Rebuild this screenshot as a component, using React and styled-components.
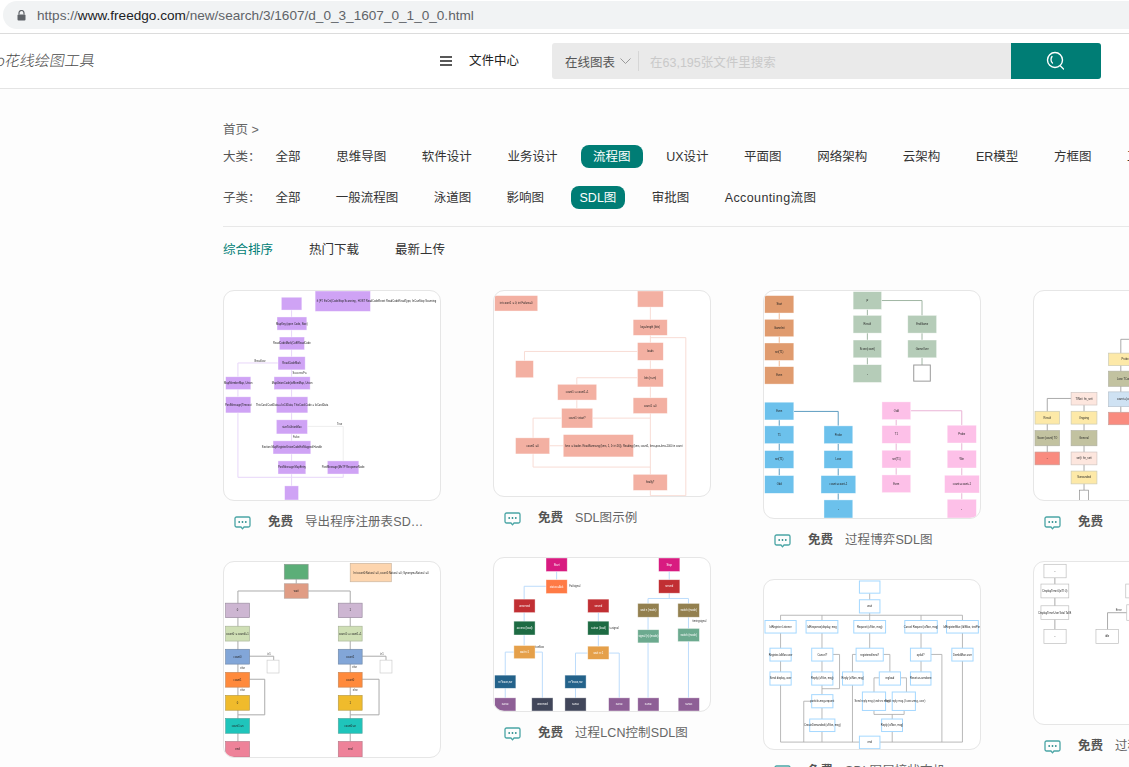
import React from 'react';
import styled, { createGlobalStyle } from 'styled-components';

const FONT = '"Liberation Sans", "Noto Sans CJK SC", sans-serif';
const TEAL = '#007d75';

const Global = createGlobalStyle`
  html, body { margin: 0; padding: 0; background: #fdfdfd; }
  body { font-family: ${FONT}; }
  * { box-sizing: border-box; }
`;

const Page = styled.div`
  width: 1129px; height: 767px; overflow: hidden; background: #fdfdfd;
  display: flex; flex-direction: column;
`;

/* browser chrome */
const Chrome = styled.div`
  height: 34px; flex: none; padding: 1px 0 4px 3px; background: #fff; border-bottom: 1px solid #dcdcdc;
`;
const UrlPill = styled.div`
  height: 28px; width: 1200px; border-radius: 14px; background: #f1f3f4;
  display: flex; align-items: center; gap: 11px; padding-left: 14px;
  font-size: 13.6px; color: #5f6368; white-space: nowrap;
`;
const Host = styled.span` color: #202124; `;

/* header */
const Header = styled.header`
  height: 55px; flex: none; background: #fff; border-bottom: 1px solid #e4e4e4;
  display: flex; align-items: center; position: relative;
`;
const LogoBox = styled.div`
  width: 440px; flex: none; overflow: hidden;
`;
const LogoText = styled.div`
  margin-left: -12px; font-family: "Noto Sans CJK SC", sans-serif; font-weight: 300; font-size: 15px;
  color: #4a4a4a; transform: skewX(-10deg) translateY(-2px); white-space: nowrap; width: 120px;
`;
const Menu = styled.div`
  display: flex; align-items: center; gap: 17px; width: 112px; flex: none;
  font-size: 12.5px; color: #222;
`;
const MenuText = styled.span` padding-bottom: 3px; `;
const Search = styled.div`
  width: 549px; height: 36px; flex: none; display: flex; border-radius: 3px; overflow: hidden;
  background: #eaeaea;
`;
const Scope = styled.div`
  display: flex; align-items: center; gap: 5px; padding-left: 13px; font-size: 12.5px; color: #555;
  &::after { content: ''; width: 1px; height: 20px; background: #d6d6d6; margin-left: 2px; }
`;
const Placeholder = styled.div`
  flex: 1; display: flex; align-items: center; padding-left: 11px; font-size: 12.5px; color: #c9c9c9;
`;
const SearchBtn = styled.div`
  width: 90px; background: ${TEAL}; display: flex; align-items: center; justify-content: center;
`;

/* filters */
const Main = styled.main`
  padding: 31px 0 0 223px; flex: 1; min-height: 0;
`;
const Crumb = styled.div`
  height: 18px; line-height: 20px; font-size: 12.5px; color: #666; margin-bottom: 7px;
`;
const FilterRow = styled.div`
  height: 23px; display: flex; align-items: center; gap: ${p => p.$gap}px; margin-bottom: 18px; white-space: nowrap;
  font-size: 12.5px; color: #333;
`;
const FilterLabel = styled.span`
  width: 17px; height: 23px; line-height: 25px; color: #555; flex: none;
`;
const Tag = styled.span`
  height: 23px; line-height: 25px; flex: none; border-radius: 8px;
  letter-spacing: ${p => p.$track || 0}px;
  ${p => p.$pad ? `padding: 0 ${p.$pad}px; margin: 0 -${p.$pad}px; background: ${TEAL}; color: #fff;` : ''}
`;
const Rule = styled.div`
  height: 1px; background: #e8e8e8; margin-top: -1px;
`;
const Sorts = styled.div`
  display: flex; gap: 36px; height: 20px; line-height: 20px; margin: 13px 0 30px; font-size: 12.5px; color: #333;
`;
const Sort = styled.span` color: ${p => p.$on ? TEAL : '#333'}; `;

/* cards */
const Grid = styled.div`
  display: grid; grid-template-columns: repeat(4, 218px); column-gap: 52px; width: 1100px;
`;
const Column = styled.div` display: flex; flex-direction: column; `;
const Thumb = styled.div`
  width: 218px; height: ${p => p.$h}px; background: #fff; border: 1px solid #e6e6e6; border-radius: 11px; overflow: hidden;
`;
const DiagramSvg = styled.svg`
  display: block; width: 100%; height: 100%; filter: blur(.6px);
  font-family: "Liberation Sans", sans-serif; font-size: 8px;
`;
const Caption = styled.div`
  height: 60px; padding: 11px 0 0 11px; display: flex; align-items: flex-start; white-space: nowrap;
  font-size: 12.5px; line-height: 20px; color: #666;
`;
const Bubble = styled.svg` flex: none; margin: 4px 17px 0 0; `;
const Free = styled.b` color: #555; font-weight: 700; width: 37px; flex: none; `;
const Title = styled.span`
  max-width: 120px; overflow: hidden; text-overflow: ellipsis; letter-spacing: .1px;
`;

function Diagram({ y0 = 13, h, groups }) {
  return (
    <DiagramSvg viewBox={`25 ${y0} 652 ${h}`} preserveAspectRatio="none">
      {groups.map((g, i) => (
        <g key={i}>
          {(g.lines || []).map((l, j) => (
            <polyline key={j} points={l} fill="none" stroke={g.line || '#aaa'} strokeWidth={g.lw || 3} />
          ))}
          {(g.nodes || []).map(([a, b, c, d, t, tx], j) => (
            <g key={j}>
              <rect x={a} y={b} width={c - a} height={d - b} fill={g.fill || '#fff'}
                stroke={g.edge || 'rgba(255,255,255,.6)'} strokeWidth={g.ew || 2} />
              {t ? (
                <text x={tx || (a + c) / 2} y={(b + d) / 2 + 3} textAnchor={tx ? 'start' : 'middle'} fill={g.ink || '#222'}>{t}</text>
              ) : null}
            </g>
          ))}
          {(g.labels || []).map(([x, y, t], j) => (
            <text key={j} x={x} y={y} fill="#333">{t}</text>
          ))}
        </g>
      ))}
    </DiagramSvg>
  );
}

const d1 = { h: 636, groups: [
  { line: '#e8d6f9', lines: ['229,71 229,606', '188,232 67,232 67,335', '67,384 67,580 385,580 385,570'], labels: [[117,228,'Breaklow'],[232,265,'Success/Fa'],[366,421,'True'],[233,460,'False']] },
  { line: '#eeeeee', lines: ['277,425 385,425 385,530'] },
  { fill: '#cfa3f5', nodes: [
    [198,32,260,71],[300,13,467,75,'if (FT. ExCnt(CodeStop Scanning , HOST ReadCodeReset ReadCodeReadType, InCanStop Scanning',305],
    [185,92,275,132,'MapKey (open Code, Size)'],[192,153,268,192,'ReadCodeMark(CoElReadCode'],[188,213,270,253,'ReadCodeMark'],
    [176,274,285,313,'MapUnionCode(ioMemMap, Union'],[30,274,106,313,'MapMemberMap, Union'],[30,335,106,384,'PostMessage(Timeout'],
    [183,335,278,384,'ThisCard.CardData = IoCtlData; ThisCard.Code = IoCardData'],[183,405,277,448,'sizeToUnionMax'],
    [173,469,287,509,'Section MapRegisterUnionCodeExtMapped Handle'],[188,530,272,570,'PostMessage MapEntry'],
    [337,530,432,570,'PostMessage(MsTP ResponseNode'],[208,606,250,649] ] },
] };

const d2 = { h: 624, groups: [
  { line: '#f8dcd5', lines: ['497,13 497,636','497,155 604,155 604,636 497,636','458,197 117,197 117,225','458,277 275,277 275,370','323,400 497,400','229,400 143,400 143,549 497,549','193,484 234,484'] },
  { fill: '#f3b0a2', nodes: [
    [27,27,157,74,'int count1 := 0; int Failure=0'],[458,13,536,62],[445,100,548,148,'key=length (bits)'],[458,170,536,224,'loads'],
    [90,225,144,277],[458,250,536,305,'bits (n+m)'],[445,338,548,386,'count1 :=0'],[217,297,335,345,'count1 := count1+1'],
    [229,370,323,430,'count1 <start?'],[90,460,193,509,'count1 :=0'],
    [234,450,446,518,'kms := loader. ReadSamsung (kms, 1, 1<<<16)), Reading (kms, count1, kms-pos-kms-1000 in count',240],[445,571,548,620,'finally?'] ] },
] };

const d3 = { h: 690, groups: [
  { line: '#f2b892', lines: ['71,80 71,99','71,152 71,171','71,224 71,243'] },
  { fill: '#e09b6e', nodes: [[27,27,115,80,'Start'],[27,99,115,152,'GameInit'],[27,171,115,224,'set(T1)'],[27,243,115,296,'Even']] },
  { line: '#9fb5a3', lines: ['337,69 337,237','380,42 502,42 502,162','502,216 502,238'] },
  { fill: '#b5ccb8', nodes: [[294,15,380,69,'P'],[294,87,380,141,'Result'],[294,162,380,216,'Score(count)'],[294,237,380,291,'-'],[459,87,546,141,'EndGame'],[459,162,546,216,'GameOver']] },
  { edge: '#999', ew: 3, nodes: [[477,238,527,287]] },
  { line: '#5a9bc0', lines: ['71,405 71,574','115,379 249,379 249,423','249,477 249,648'] },
  { fill: '#6cc1ec', nodes: [[27,351,115,405,'Even'],[27,423,115,477,'T1'],[27,498,115,552,'set(T1)'],[27,574,115,628,'Odd'],[206,423,293,477,'Probe'],[206,498,293,552,'Lose'],[197,574,302,628,'count:=count-1'],[206,648,293,703,'-']] },
  { line: '#eab2d6', lines: ['424,404 424,572','468,377 622,377 622,421','622,475 622,646'] },
  { fill: '#fdc0e8', nodes: [[381,350,468,404,'Odd'],[381,422,468,476,'T1'],[381,497,468,551,'set(T1)'],[381,572,468,626,'Even'],[578,421,666,475,'Probe'],[578,497,666,551,'Win'],[570,573,675,627,'count:=count+1'],[578,646,666,703,'-']] },
] };

const d4 = { h: 636, groups: [
  { line: '#999', lw: 2.5, lines: ['287,160 360,160','287,160 287,382','137,340 65,340 65,503','176,360 176,619'] },
  { fill: '#fde9a8', edge: '#c9c9b5', nodes: [[250,202,350,240,'Probe'],[28,379,102,418,'Result'],[137,379,215,418,'Ongoing'],[137,561,215,600,'Surrounded']] },
  { fill: '#c2c2a0', edge: '#b0b0a0', nodes: [[250,257,350,303,'Lose TCancel'],[28,438,102,484,'Score:(count) TO'],[137,438,215,484,'General']] },
  { fill: '#cfe2f3', edge: '#b5c0cc', nodes: [[250,320,350,365,'count:=(count']] },
  { fill: '#f98b7f', edge: '#c9a09a', nodes: [[250,382,350,420],[28,503,102,542,'-']] },
  { fill: '#fde6de', edge: '#cfc4c0', nodes: [[137,322,215,360,'TINsit_fin_sett'],[137,503,215,542,'set(t_fin_sett']] },
  { edge: '#888', nodes: [[162,619,190,652]] },
] };

const e1 = { y0: 18, h: 592, groups: [
  { line: '#aaa', lines: ['243,70 243,84','207,106 67,106 67,563','279,106 406,106 406,563','102,304 175,304 175,316','442,304 514,304 514,316','102,374 148,374 148,482 67,482','442,374 493,374 493,482 406,482'],
    labels: [[155,300,'i>1'],[496,300,'i>1'],[74,343,'else'],[412,339,'else'],[74,410,'else'],[414,409,'else']] },
  { fill: '#5cae78', edge: '#8a9c90', nodes: [[207,25,279,70]] },
  { fill: '#e09c84', edge: '#b8a49c', nodes: [[207,84,279,128,'wait']] },
  { fill: '#fdd5ae', edge: '#c8b49e', nodes: [[406,22,530,78,'Int count0:Natural :=0, count1:Natural :=0; Synonym=Natural :=0',416]] },
  { fill: '#cdb6d2', edge: '#9a8ca0', nodes: [[30,143,102,187,'0'],[370,143,442,187,'1']] },
  { fill: '#cfdfb5', edge: '#a8b498', nodes: [[30,213,102,258,'count0 := count0+1'],[370,213,442,258,'count1 := count1+1']] },
  { fill: '#82a6d8', edge: '#7088a8', nodes: [[30,283,102,328,'count0'],[370,283,442,328,'count1']] },
  { fill: '#ff8a3c', edge: '#c88858', nodes: [[30,353,102,398,'count1'],[370,353,442,398,'count0']] },
  { fill: '#f0bb2c', edge: '#b89c48', nodes: [[30,423,102,468,'0'],[370,423,442,468,'1']] },
  { fill: '#1fc5bb', edge: '#50a8a0', nodes: [[30,493,102,538,'count1:=n'],[370,493,442,538,'count0:=n']] },
  { fill: '#ee8299', edge: '#b87888', nodes: [[30,563,102,610,'end'],[370,563,442,610,'end']] },
  { edge: '#ccc', nodes: [[155,316,191,355],[496,316,532,355]] },
] };

const e2 = { y0: 22, h: 465, groups: [
  { line: '#bcdcfb', lines: ['214,63 214,88','182,108 116,108 116,288','85,308 59,308 59,447','149,308 171,308 171,447','340,188 340,290','308,311 271,311 271,447','372,311 403,311 403,447','554,63 554,145','490,145 612,145','490,145 490,447','612,145 612,447'],
    labels: [[252,111,'Failsignal'],[140,297,'actionflow'],[374,238,'t=signal'],[624,215,'timingsignal']] },
  { fill: '#d81b80', ink: '#fff', nodes: [[182,22,246,63,'Start'],[522,22,586,63,'Stop']] },
  { fill: '#ff7a45', ink: '#fff', nodes: [[182,88,246,130,'status:=Ack']] },
  { fill: '#c12f33', ink: '#fff', nodes: [[85,147,149,188,'unserved'],[308,147,372,188,'served'],[522,88,586,129,'served']] },
  { fill: '#1d6b43', ink: '#fff', nodes: [[85,214,149,256,'access (load)'],[308,214,372,256,'c=true (load)']] },
  { fill: '#e5a04a', ink: '#fff', nodes: [[85,288,149,328,'wait n:1'],[308,290,372,330,'wait :n:1']] },
  { fill: '#93804f', ink: '#fff', nodes: [[459,160,523,202,'wait n (mode)'],[580,160,645,202,'switch (mode)']] },
  { fill: '#6caa8f', ink: '#fff', nodes: [[459,240,523,280,'signal (n) (mode)'],[580,236,645,276,'switch (mode)']] },
  { fill: '#23628a', ink: '#fff', nodes: [[27,378,91,418,'re*leave,nw'],[239,378,303,418,'re*leave,nw']] },
  { fill: '#8e5f96', ink: '#fff', nodes: [[27,447,91,487,'s=nac'],[371,447,435,487,'s=nac'],[459,447,523,487,'s=nac'],[581,447,645,487,'s=nac']] },
  { fill: '#41465a', ink: '#fff', nodes: [[139,447,203,487,'unserved'],[239,447,303,487,'s=nac']] },
] };

const e3 = { y0: 28, h: 513, groups: [
  { line: '#aaa', lw: 2.5, lines: ['344,68 344,235','75,135 624,135','75,135 75,520 624,520','200,135 200,376','233,254 253,254 253,358 200,358','200,416 200,520','145,520 145,396 169,396','303,254 292,254 292,520','385,254 405,254 405,307','499,135 499,307','529,254 562,254 562,520','624,135 624,520','373,325 357,325 357,368','437,325 455,325 455,368','357,424 357,436 448,436 448,424','412,436 412,520'] },
  { edge: '#a4d8ff', ew: 3, nodes: [
    [313,31,375,68],[313,88,375,128,'wait'],[28,151,122,189,'IdRegister Listener'],[152,151,248,189,'IdResponse(display, msg'],
    [296,151,392,189,'Request (x/Nxn, msg)'],[450,151,548,189,'Cancel Request (x/Nxn, msg)'],[576,151,672,189,'IdRegisterBlue (Id/Blue, testPort)'],
    [43,235,107,274,'Register-IdMan.user'],[169,235,233,274,'Cancel?'],[303,235,385,274,'registered/new?'],[467,235,529,274,'opfail?'],[592,235,656,274,'DemIdMan.user'],
    [43,307,107,347,'Send display, user'],[169,307,233,347,'Reply (x/Nxn, msg)'],[262,307,324,347,'Reply (x/Nxn, msg)'],[373,307,437,347,'regload'],[467,307,529,347,'Reset as-sendone'],
    [169,376,233,416,'particle-msg-request'],[322,368,392,424],[412,368,482,424],[163,450,239,488,'CreateDemanded (x/Nxn, msg)'],[380,450,443,488,'Reply (x/Nxn, msg)'],[313,502,375,540,'end'] ] },
  { labels: [[298,398,'Send reply msg.(sndrsrv msg)'],[390,398,'Send reply msg.(#user=msg, user)']] },
] };

const e4 = { h: 492, groups: [
  { line: '#999', lw: 2.5, lines: ['88,61 88,218','305,167 247,167 247,218'], labels: [[272,163,'Error']] },
  { edge: '#bbb', nodes: [[55,20,122,61,'-'],[46,80,130,122,'DisplayTime:0(x/TI:0)'],[46,146,130,188,'DisplayTime:UserTotal Tal B'],[55,218,122,260,'-'],[212,218,280,260,'idle'],[302,80,360,122],[305,143,360,190]] },
] };

const columns = [
  [{ d: d1, hpx: 211, t: '导出程序注册表SDL图' }, { d: e1, hpx: 197, t: '' }],
  [{ d: d2, hpx: 207, t: 'SDL图示例' }, { d: e2, hpx: 155, t: '过程LCN控制SDL图' }],
  [{ d: d3, hpx: 229, t: '过程博弈SDL图' }, { d: e3, hpx: 171, t: 'SDL图层接状态机' }],
  [{ d: d4, hpx: 211, t: '' }, { d: e4, hpx: 164, t: '过程状态机' }],
];

const MainTags = ['全部','思维导图','软件设计','业务设计','流程图','UX设计','平面图','网络架构','云架构','ER模型','方框图','工业设计'];
const SubTags = ['全部','一般流程图','泳道图','影响图','SDL图','审批图','Accounting流图'];

const BubbleIcon = () => (
  <Bubble width="17" height="14" viewBox="0 0 17 14" fill="none">
    <path d="M2.5 1h12A1.5 1.5 0 0 1 16 2.5v7a1.5 1.5 0 0 1-1.5 1.5H10L8.5 12.8 7 11H2.5A1.5 1.5 0 0 1 1 9.500v-7A1.500 1.500 0 0 1 2.500 1z" stroke="#4aa5a5" strokeWidth="1.300" />
    <circle cx="5.200" cy="6" r=".9" fill="#2f8f8f" /><circle cx="8.500" cy="6" r=".9" fill="#2f8f8f" /><circle cx="11.800" cy="6" r=".9" fill="#2f8f8f" />
  </Bubble>
);

const Item = ({ d, hpx, t }) => (
  <div>
    <Thumb $h={hpx}><Diagram {...d} /></Thumb>
    <Caption>
      <BubbleIcon />
      <Free>免费</Free>
      <Title>{t}</Title>
    </Caption>
  </div>
);

export default function App() {
  return (
    <Page>
      <Global />
      <Chrome>
        <UrlPill>
          <svg width="9" height="11" viewBox="0 0 9 11">
            <path d="M2 4.500V3a2.500 2.500 0 0 1 5 0v1.500" fill="none" stroke="#5f6368" strokeWidth="1.200" />
            <rect x=".5" y="4.500" width="8" height="6" rx="1" fill="#5f6368" />
          </svg>
          <span>https://<Host>www.freedgo.com</Host>/new/search/3/1607/d_0_3_1607_0_1_0_0.html</span>
        </UrlPill>
      </Chrome>
      <Header>
        <LogoBox><LogoText>go花线绘图工具</LogoText></LogoBox>
        <Menu>
          <svg width="12" height="10" viewBox="0 0 12 10"><path d="M0 1h12M0 5h12M0 9h12" stroke="#222" strokeWidth="1.300" /></svg>
          <MenuText>文件中心</MenuText>
        </Menu>
        <Search>
          <Scope>
            在线图表
            <svg width="11" height="6" viewBox="0 0 11 6" fill="none"><path d="M.5.500 5.500 5.500 10.500.500" stroke="#999" /></svg>
          </Scope>
          <Placeholder>在63,195张文件里搜索</Placeholder>
          <SearchBtn>
            <svg width="20" height="20" viewBox="0 0 20 20" fill="none" stroke="#fff">
              <circle cx="9" cy="9" r="7.500" strokeWidth="1.400" />
              <path d="M6 5.500C4.500 7.500 4.700 10.500 6.500 12M14.500 15l3 3" strokeWidth="1.300" strokeLinecap="round" />
            </svg>
          </SearchBtn>
        </Search>
      </Header>
      <Main>
        <Crumb>首页 &gt;</Crumb>
        <FilterRow $gap={35.6}>
          <FilterLabel>大类：</FilterLabel>
          {MainTags.map(t => <Tag key={t} $pad={t === '流程图' ? 12 : 0}>{t}</Tag>)}
        </FilterRow>
        <FilterRow $gap={35.4}>
          <FilterLabel>子类：</FilterLabel>
          {SubTags.map(t => <Tag key={t} $pad={t === 'SDL图' ? 9 : 0} $track={t.startsWith('Acc') ? 0.4 : 0}>{t}</Tag>)}
        </FilterRow>
        <Rule />
        <Sorts>
          <Sort $on>综合排序</Sort><Sort>热门下载</Sort><Sort>最新上传</Sort>
        </Sorts>
        <Grid>
          {columns.map((col, i) => (
            <Column key={i}>
              {col.map((it, j) => <Item key={j} {...it} />)}
            </Column>
          ))}
        </Grid>
      </Main>
    </Page>
  );
}
